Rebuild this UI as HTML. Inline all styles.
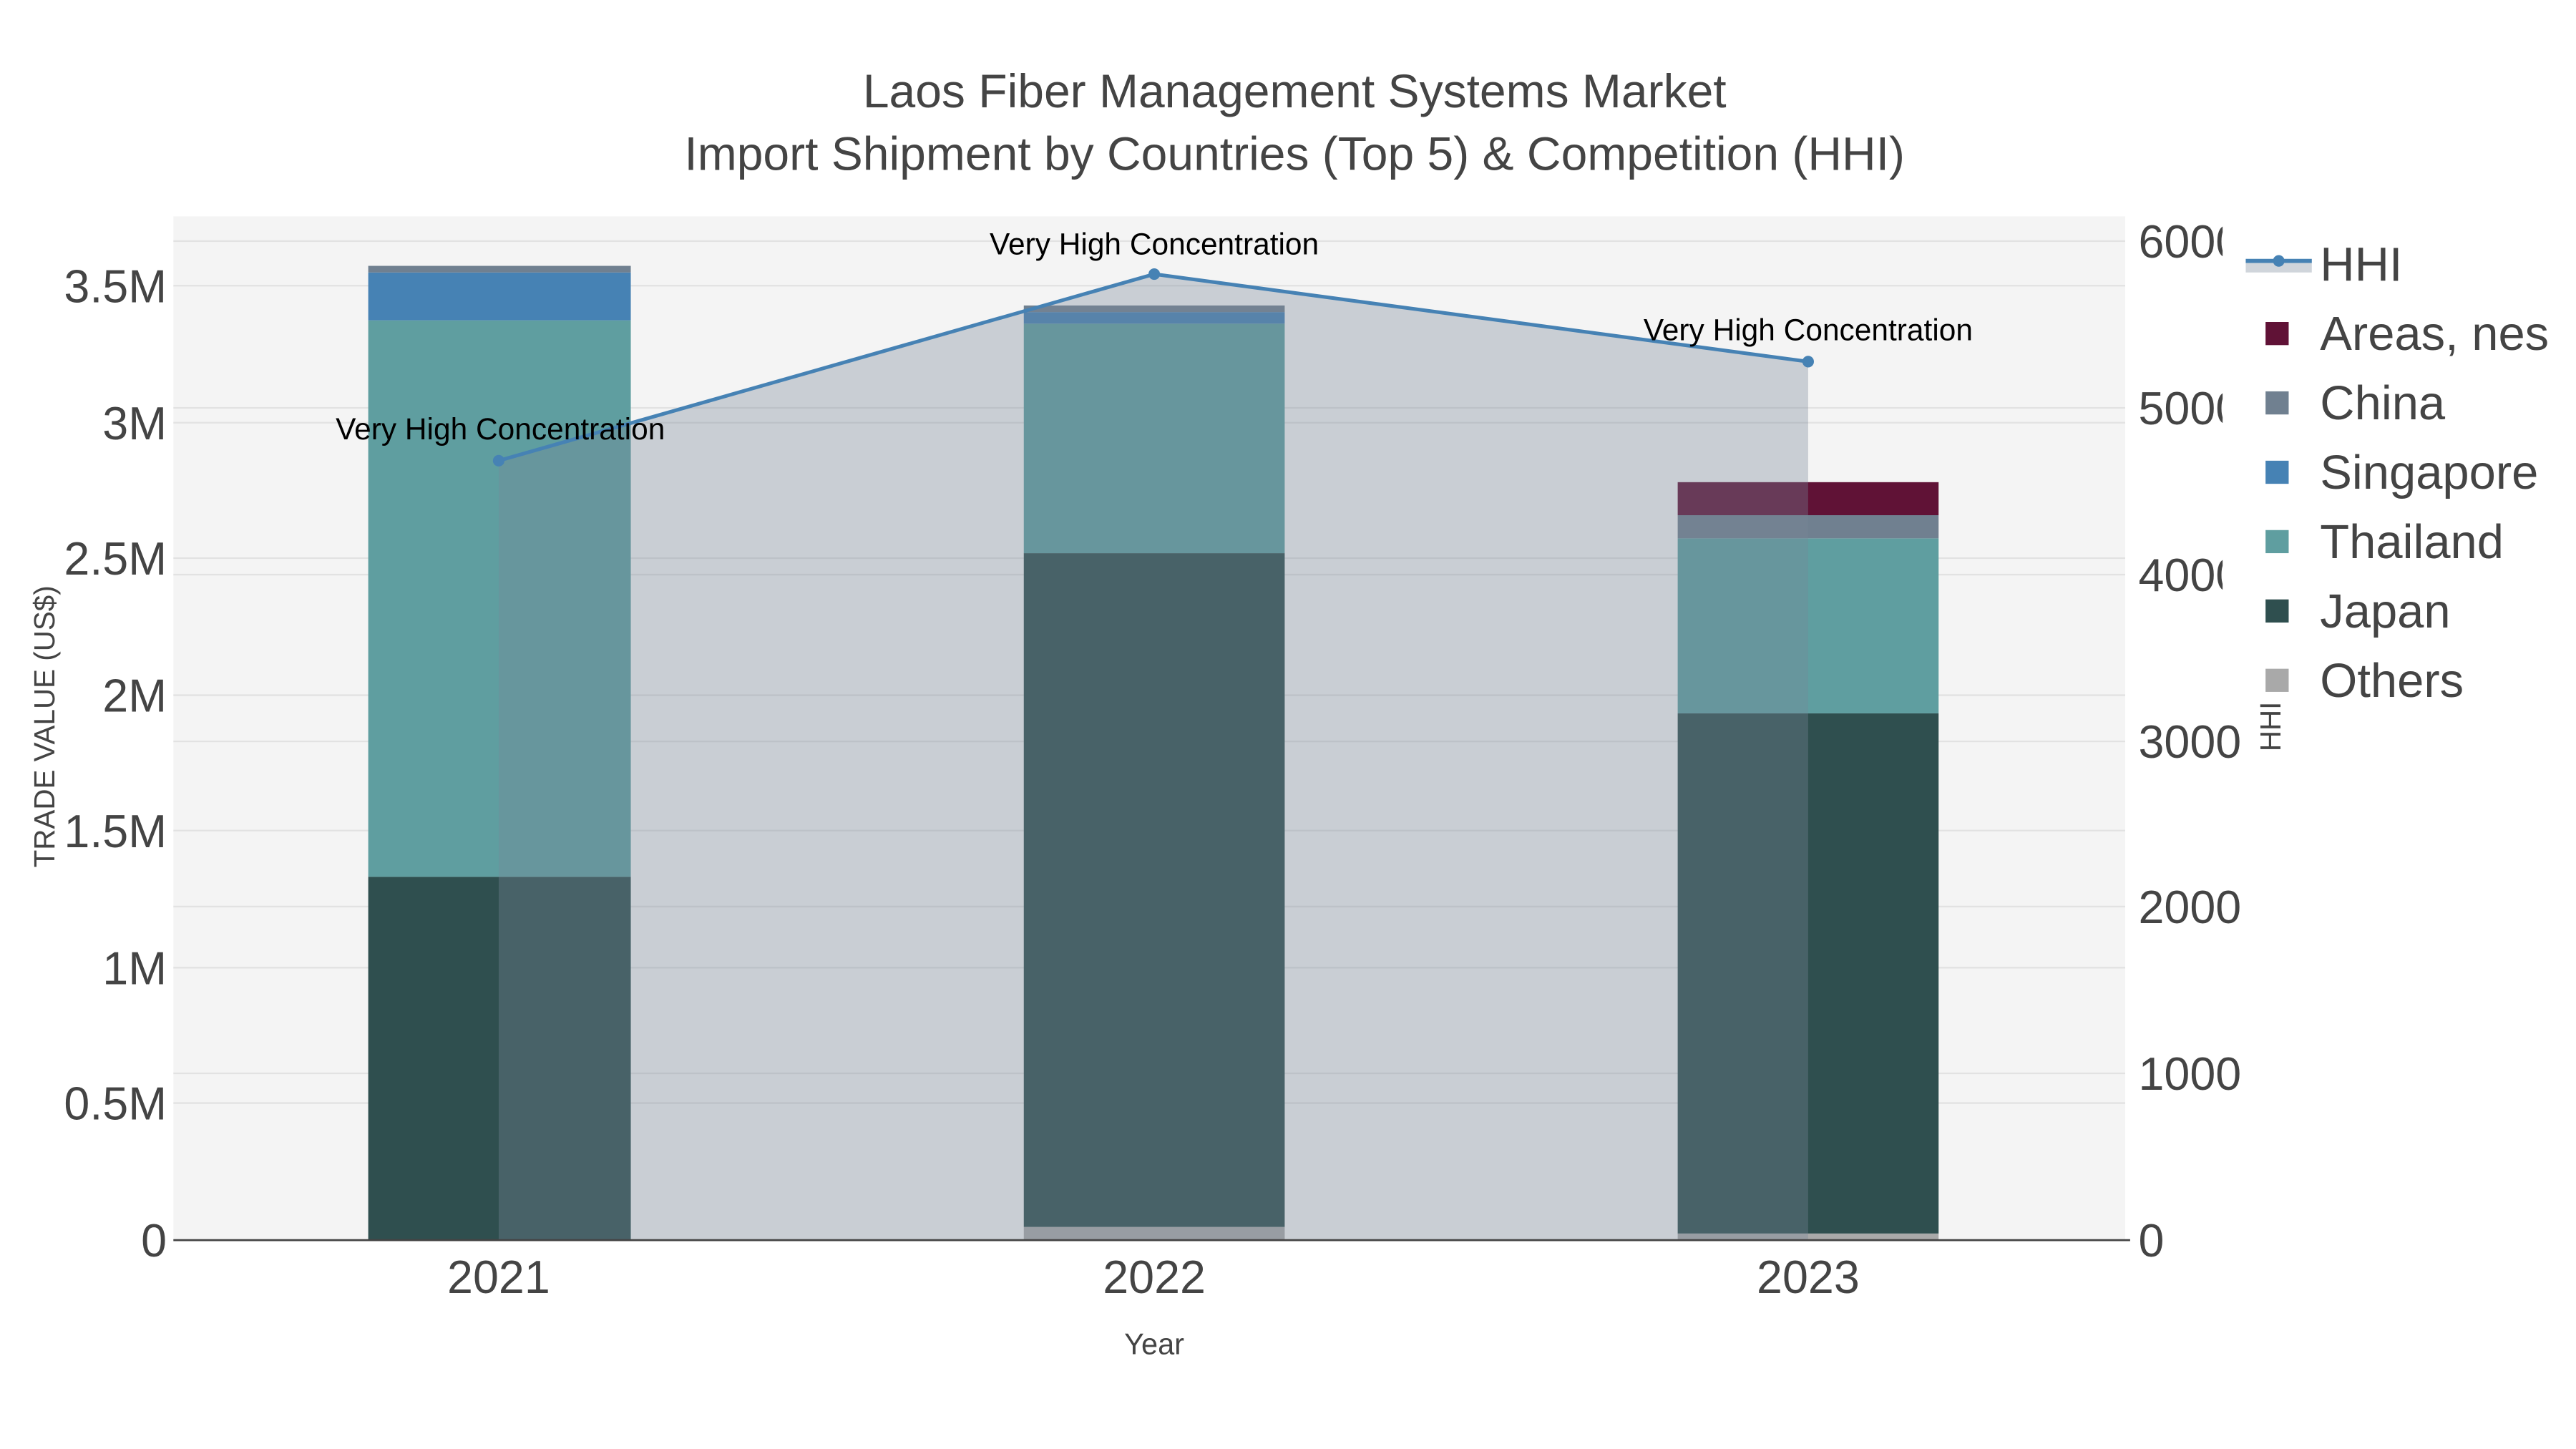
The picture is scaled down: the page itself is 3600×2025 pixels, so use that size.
<!DOCTYPE html>
<html><head><meta charset="utf-8"><style>
html,body{margin:0;padding:0;background:#fff;}
svg{display:block;}
text{font-family:"Liberation Sans",sans-serif;}
</style></head><body>
<svg width="3600" height="2025" viewBox="0 0 1560 877.5" xmlns="http://www.w3.org/2000/svg">
<defs><clipPath id="rc"><rect x="1290" y="0" width="56" height="460"/></clipPath></defs>
<rect x="0" y="0" width="1560" height="877.5" fill="#fff"/>
<rect x="105" y="131" width="1182" height="620" fill="#f4f4f4"/>
<g stroke="#e2e2e2" stroke-width="1">
<line x1="105" x2="1287" y1="173" y2="173"/><line x1="105" x2="1287" y1="256" y2="256"/>
<line x1="105" x2="1287" y1="338" y2="338"/><line x1="105" x2="1287" y1="421" y2="421"/>
<line x1="105" x2="1287" y1="503" y2="503"/><line x1="105" x2="1287" y1="586" y2="586"/>
<line x1="105" x2="1287" y1="668" y2="668"/>
<line x1="105" x2="1287" y1="146" y2="146"/><line x1="105" x2="1287" y1="247" y2="247"/>
<line x1="105" x2="1287" y1="348" y2="348"/><line x1="105" x2="1287" y1="449" y2="449"/>
<line x1="105" x2="1287" y1="549" y2="549"/><line x1="105" x2="1287" y1="650" y2="650"/>
</g>
<!-- 2021 -->
<rect x="223" y="531" width="159" height="220" fill="#2f4f4f"/>
<rect x="223" y="194" width="159" height="337" fill="#5f9ea0"/>
<rect x="223" y="165" width="159" height="29" fill="#4682b4"/>
<rect x="223" y="161" width="159" height="4" fill="#708090"/>
<!-- 2022 -->
<rect x="620" y="743" width="158" height="8" fill="#a9a9a9"/>
<rect x="620" y="335" width="158" height="408" fill="#2f4f4f"/>
<rect x="620" y="196" width="158" height="139" fill="#5f9ea0"/>
<rect x="620" y="189" width="158" height="7" fill="#4682b4"/>
<rect x="620" y="185" width="158" height="4" fill="#708090"/>
<!-- 2023 -->
<rect x="1016" y="747" width="158" height="4" fill="#a9a9a9"/>
<rect x="1016" y="432" width="158" height="315" fill="#2f4f4f"/>
<rect x="1016" y="326" width="158" height="106" fill="#5f9ea0"/>
<rect x="1016" y="312" width="158" height="14" fill="#708090"/>
<rect x="1016" y="292" width="158" height="20" fill="#601236"/>
<!-- HHI area -->
<polygon points="302,279 699,166 1095,219 1095,751 302,751" fill="rgba(119,136,153,0.35)"/>
<polyline points="302,279 699,166 1095,219" fill="none" stroke="#4682b4" stroke-width="2.2"/>
<circle cx="302" cy="279" r="3.5" fill="#4682b4"/><circle cx="699" cy="166" r="3.5" fill="#4682b4"/><circle cx="1095" cy="219" r="3.5" fill="#4682b4"/>
<line x1="105" x2="1290" y1="751" y2="751" stroke="#444" stroke-width="1.2"/>
<g font-size="18.4" fill="#000" text-anchor="middle">
<text x="303" y="266">Very High Concentration</text>
<text x="699" y="154">Very High Concentration</text>
<text x="1095" y="206">Very High Concentration</text>
</g>
<g font-size="28.6" fill="#444" text-anchor="middle">
<text x="784" y="65">Laos Fiber Management Systems Market</text>
<text x="784" y="103">Import Shipment by Countries (Top 5) &amp; Competition (HHI)</text>
</g>
<g font-size="28" fill="#444" text-anchor="end">
<text x="101" y="183">3.5M</text><text x="101" y="266">3M</text><text x="101" y="348">2.5M</text>
<text x="101" y="431">2M</text><text x="101" y="513">1.5M</text><text x="101" y="596">1M</text>
<text x="101" y="678">0.5M</text><text x="101" y="761">0</text>
</g>
<g font-size="28" fill="#444">
<g clip-path="url(#rc)"><text x="1295" y="156">6000</text><text x="1295" y="257">5000</text><text x="1295" y="358">4000</text></g>
<text x="1295" y="459">3000</text><text x="1295" y="559">2000</text><text x="1295" y="660">1000</text><text x="1295" y="761">0</text>
</g>
<g font-size="28" fill="#444" text-anchor="middle">
<text x="302" y="783">2021</text><text x="699" y="783">2022</text><text x="1095" y="783">2023</text>
</g>
<text x="699" y="820" font-size="18" fill="#444" text-anchor="middle">Year</text>
<text transform="translate(33,440) rotate(-90)" font-size="17.5" fill="#444" text-anchor="middle">TRADE VALUE (US$)</text>
<text transform="translate(1381,440) rotate(-90)" font-size="17.5" fill="#444" text-anchor="middle">HHI</text>
<!-- legend -->
<rect x="1360" y="157" width="40" height="8" fill="rgba(119,136,153,0.35)"/>
<line x1="1360" x2="1400" y1="158" y2="158" stroke="#4682b4" stroke-width="2.5"/>
<circle cx="1380" cy="158" r="3.5" fill="#4682b4"/>
<rect x="1372" y="195" width="14" height="14" fill="#601236"/>
<rect x="1372" y="237" width="14" height="14" fill="#708090"/>
<rect x="1372" y="279" width="14" height="14" fill="#4682b4"/>
<rect x="1372" y="321" width="14" height="14" fill="#5f9ea0"/>
<rect x="1372" y="363" width="14" height="14" fill="#2f4f4f"/>
<rect x="1372" y="405" width="14" height="14" fill="#a9a9a9"/>
<g font-size="29" fill="#444">
<text x="1405" y="170">HHI</text><text x="1405" y="212">Areas, nes</text><text x="1405" y="254">China</text>
<text x="1405" y="296">Singapore</text><text x="1405" y="338">Thailand</text><text x="1405" y="380">Japan</text>
<text x="1405" y="422">Others</text>
</g>
</svg>
</body></html>
